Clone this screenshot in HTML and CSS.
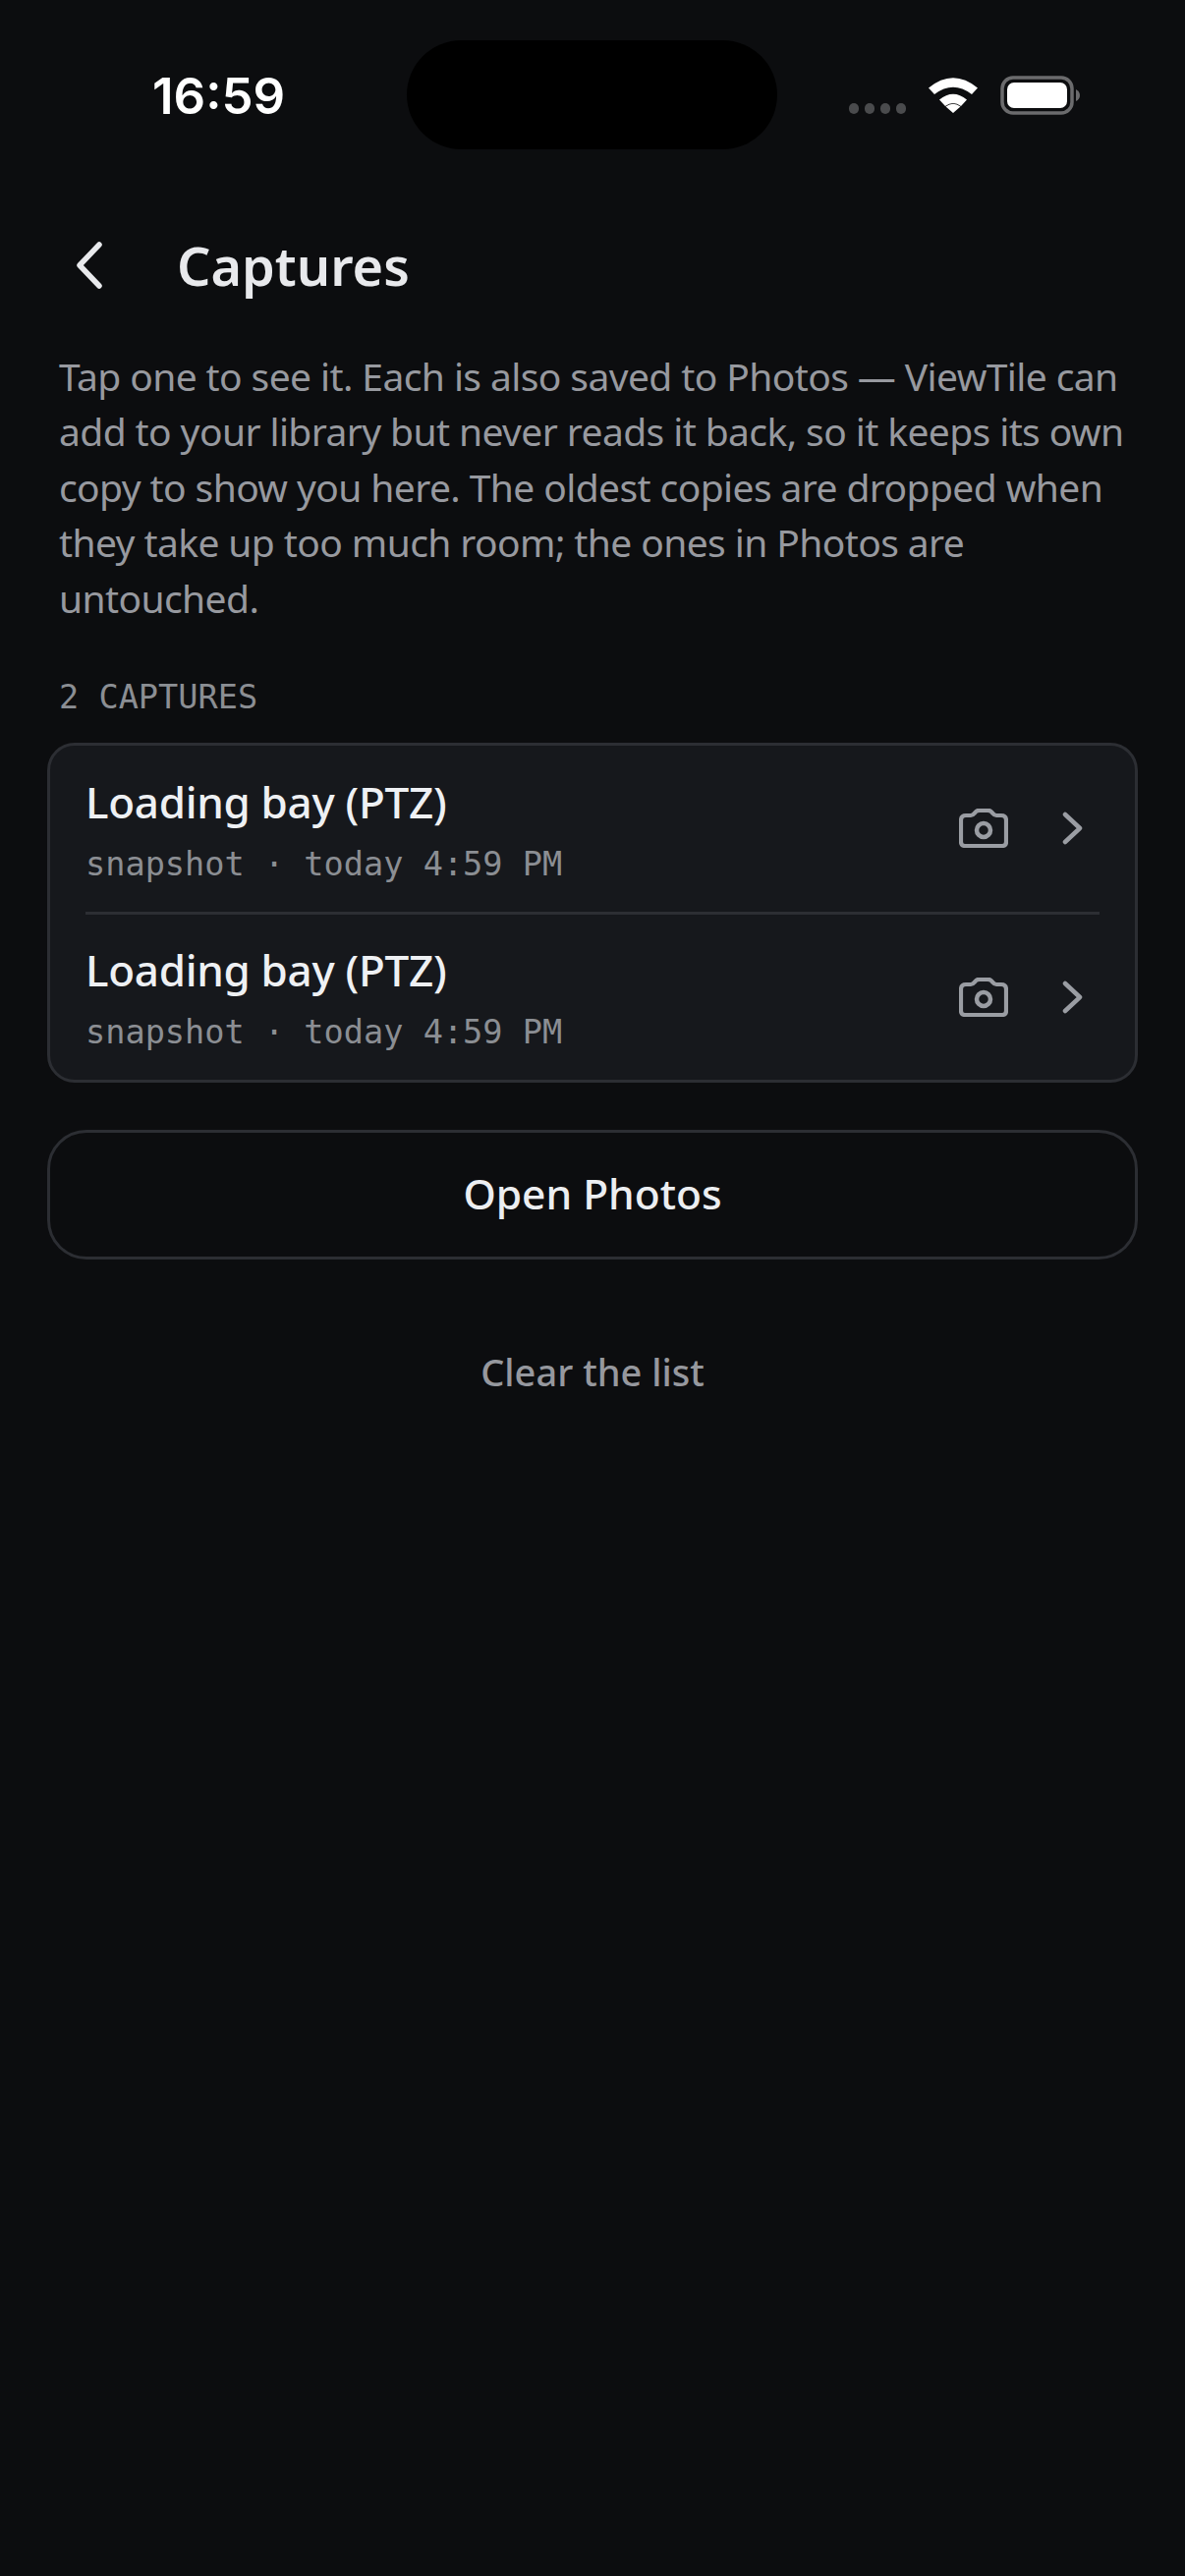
FILE: index.html
```html
<!DOCTYPE html>
<html lang="en">
<head>
<meta charset="utf-8">
<title>Captures</title>
<link rel="stylesheet" href="styles.css">
</head>
<body>
<div class="screen">
  <div class="status">
    <span class="time">16:59</span>
    <div class="island"></div>
    <div class="status-icons">
      <div class="dots"><i></i><i></i><i></i><i></i></div>
      <svg class="wifi" width="52" height="38" viewBox="0 0 52 38"><path d="M1 12.500 Q26 -8 51 12.500 L45 19 Q26 4.500 7 19Z M12 24.500 Q26 13 40 24.500 L34 31 Q26 25 18 31Z M18.500 31.500 Q26 26 33.500 31.500 L26 38Z" fill="#fff"/></svg>
      <svg class="battery" width="82" height="40" viewBox="0 0 82 40"><rect x="2" y="2" width="71" height="36" rx="11" fill="none" stroke="#6b6b6d" stroke-width="3.500"/><rect x="7" y="7" width="61" height="26" rx="7" fill="#fff"/><path d="M77 14 Q81 16 81 20 Q81 24 77 26Z" fill="#6b6b6d"/></svg>
    </div>
  </div>
  <header class="nav">
    <svg class="back" width="36" height="48" viewBox="0 0 36 48"><path d="M27 3 L7 24 L27 45" fill="none" stroke="#e8e9ec" stroke-width="5.500" stroke-linecap="round" stroke-linejoin="round"/></svg>
    <h1 class="title">Captures</h1>
  </header>
  <p class="intro">Tap one to see it. Each is also saved to Photos — ViewTile can add to your library but never reads it back, so it keeps its own copy to show you here. The oldest copies are dropped when they take up too much room; the ones in Photos are untouched.</p>
  <div class="count">2 CAPTURES</div>
  <section class="card">
    <div class="row">
      <div class="row-text">
        <div class="row-title">Loading bay (PTZ)</div>
        <div class="row-meta">snapshot · today 4:59 PM</div>
      </div>
      <svg class="cam" width="50" height="40" viewBox="0 0 50 40"><path d="M7 7 H12 Q14 7 15.500 5 L17.500 2.800 Q18.800 1.800 21 1.800 H29 Q31.200 1.800 32.500 2.800 L34.500 5 Q36 7 38 7 H43 Q48 7 48 12 V34 Q48 38 44 38 H6 Q2 38 2 34 V12 Q2 7 7 7Z" fill="none" stroke="#9a9da3" stroke-width="4.200" stroke-linejoin="round"/><circle cx="25" cy="22" r="7" fill="none" stroke="#9a9da3" stroke-width="4.500"/></svg>
      <svg class="chev" width="22" height="34" viewBox="0 0 22 34"><path d="M3 3 L18 17 L3 31" fill="none" stroke="#9a9da3" stroke-width="4.500" stroke-linecap="round" stroke-linejoin="round"/></svg>
    </div>
    <div class="row">
      <div class="row-text">
        <div class="row-title">Loading bay (PTZ)</div>
        <div class="row-meta">snapshot · today 4:59 PM</div>
      </div>
      <svg class="cam" width="50" height="40" viewBox="0 0 50 40"><path d="M7 7 H12 Q14 7 15.500 5 L17.500 2.800 Q18.800 1.800 21 1.800 H29 Q31.200 1.800 32.500 2.800 L34.500 5 Q36 7 38 7 H43 Q48 7 48 12 V34 Q48 38 44 38 H6 Q2 38 2 34 V12 Q2 7 7 7Z" fill="none" stroke="#9a9da3" stroke-width="4.200" stroke-linejoin="round"/><circle cx="25" cy="22" r="7" fill="none" stroke="#9a9da3" stroke-width="4.500"/></svg>
      <svg class="chev" width="22" height="34" viewBox="0 0 22 34"><path d="M3 3 L18 17 L3 31" fill="none" stroke="#9a9da3" stroke-width="4.500" stroke-linecap="round" stroke-linejoin="round"/></svg>
    </div>
  </section>
  <button class="open">Open Photos</button>
  <button class="clear">Clear the list</button>
</div>
</body>
</html>
```
FILE: styles.css
```css
* { box-sizing: border-box; }
html, body { margin: 0; padding: 0; background: #0c0d0f; }
.screen { width: 1206px; height: 2622px; overflow: hidden; background: #0c0d0f; display: flex; flex-direction: column; font-family: "Noto Sans", sans-serif; }
.status { height: 235px; flex: none; position: relative; display: flex; padding: 65px 0 0 155px; }
.time { font-family: "Inter", sans-serif; font-size: 51px; font-weight: 600; line-height: 66px; color: #fff; }
.island { position: absolute; left: 414px; top: 41px; width: 377px; height: 111px; background: #000; border-radius: 56px; }
.status-icons { position: absolute; left: 864px; top: 77px; display: flex; align-items: flex-start; }
.dots { display: flex; gap: 6px; margin-top: 28px; width: 104px; }
.dots i { width: 10px; height: 11px; border-radius: 5px; background: #4a4b4d; }
.wifi { margin-left: -24px; }
.battery { margin-left: 22px; }
.nav { display: flex; align-items: center; height: 70px; flex: none; padding-left: 74px; gap: 70px; }
.back { flex: none; }
.title { margin: -1px 0 0; font-size: 54px; font-weight: 600; color: #e8e9ec; line-height: 70px; }
.intro { margin: 50px 0 0; padding: 0 46px 0 60px; font-size: 39px; line-height: 56.400px; letter-spacing: -0.600px; color: #97999f; }
.count { margin: 51px 0 0 60px; font-family: "DejaVu Sans Mono", monospace; font-size: 33.600px; line-height: 44px; color: #8b8e93; }
.card { margin: 24px 48px 0; height: 346px; flex: none; border: 3px solid #2c2e33; border-radius: 28px; background: #16181c; padding: 0 36px; display: flex; flex-direction: column; }
.row { flex: 1; display: flex; align-items: center; padding-right: 16px; }
.row + .row { border-top: 3px solid #2c2e33; }
.row-text { flex: 1; display: flex; flex-direction: column; gap: 13px; padding-top: 2px; }
.row-title { font-size: 44px; font-weight: 500; line-height: 58px; letter-spacing: -0.300px; color: #eef0f3; }
.row-meta { font-family: "DejaVu Sans Mono", monospace; font-size: 33.600px; line-height: 44px; color: #8b8e93; }
.cam { flex: none; margin-right: 55px; }
.chev { flex: none; }
.open { margin: 48px 48px 0; height: 132px; flex: none; background: transparent; border: 3px solid #2c2e33; border-radius: 40px; padding: 0 0 3px; font-family: "Noto Sans", sans-serif; font-size: 42.500px; font-weight: 500; color: #eceef1; }
.clear { margin: 89px auto 0; background: none; border: 0; padding: 0; font-family: "Noto Sans", sans-serif; font-size: 38px; font-weight: 500; line-height: 50px; color: #96989e; }
```
